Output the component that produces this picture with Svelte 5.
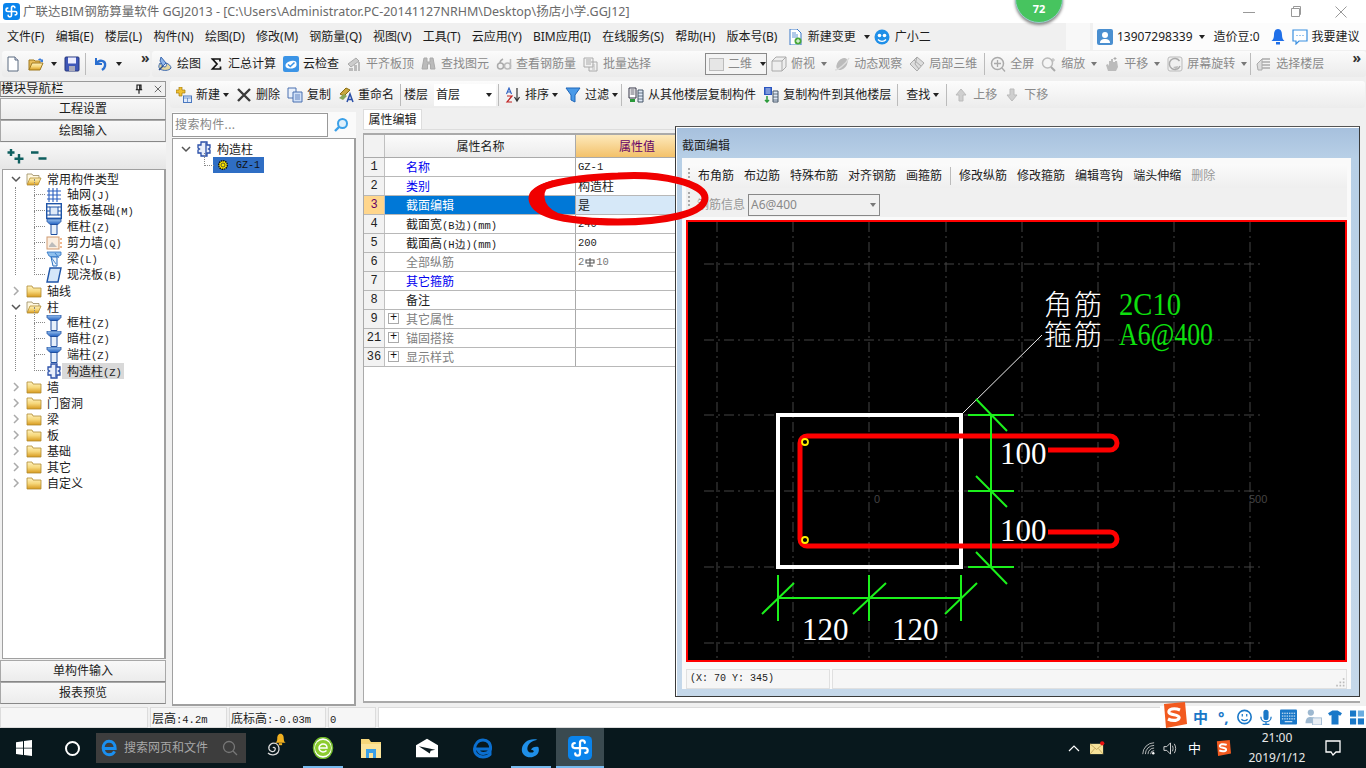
<script>
  const menu = ['文件(F)','编辑(E)','楼层(L)','构件(N)','绘图(D)','修改(M)','钢筋量(Q)','视图(V)','工具(T)','云应用(Y)','BIM应用(I)','在线服务(S)','帮助(H)','版本号(B)'];
  const tb1 = [
    {i:'paint',t:'绘图'},{i:'sigma',t:'汇总计算'},{i:'cloud',t:'云检查'},
    {i:'align',t:'平齐板顶',g:1},{i:'binoc',t:'查找图元',g:1},{i:'sixd',t:'查看钢筋量',g:1},{i:'batch',t:'批量选择',g:1}
  ];
  const tb1b = [
    {i:'cube',t:'俯视',g:1,c:1},{i:'orbit',t:'动态观察',g:1},{i:'local',t:'局部三维',g:1},{s:1},
    {i:'zoomf',t:'全屏',g:1},{i:'zoom',t:'缩放',g:1,c:1},{i:'pan',t:'平移',g:1,c:1},{i:'rot',t:'屏幕旋转',g:1,c:1},{s:1},{i:'floor',t:'选择楼层',g:1}
  ];
  const kinds = [
    {i:'grid',t:'轴网',m:'(J)'},{i:'raft',t:'筏板基础',m:'(M)'},{i:'col',t:'框柱',m:'(Z)'},
    {i:'wall',t:'剪力墙',m:'(Q)'},{i:'beam',t:'梁',m:'(L)'},{i:'slab',t:'现浇板',m:'(B)'}
  ];
  const cols = [
    {i:'col',t:'框柱',m:'(Z)'},{i:'col',t:'暗柱',m:'(Z)'},{i:'col',t:'端柱',m:'(Z)'},{i:'puzzle',t:'构造柱',m:'(Z)',on:1}
  ];
  const folders = ['墙','门窗洞','梁','板','基础','其它','自定义'];
  const props = [
    {n:'1',t:'名称',v:'GZ-1',c:'blue'},{n:'2',t:'类别',v:'构造柱',c:'blue'},{n:'3',t:'截面编辑',v:'是',sel:1},
    {n:'4',t:'截面宽',m:'(B边)(mm)',v:'240'},{n:'5',t:'截面高',m:'(H边)(mm)',v:'200'},
    {n:'6',t:'全部纵筋',c:'gray',rebar:1},{n:'7',t:'其它箍筋',c:'blue'},{n:'8',t:'备注'},
    {n:'9',t:'其它属性',c:'gray',plus:1},{n:'21',t:'锚固搭接',c:'gray',plus:1},{n:'36',t:'显示样式',c:'gray',plus:1}
  ];
  const dlgTools = ['布角筋','布边筋','特殊布筋','对齐钢筋','画箍筋','|','修改纵筋','修改箍筋','编辑弯钩','端头伸缩'];
  const vx = [718,794,870,947,1023,1099,1175,1251];
  const hy = [264,340,415,491,567,643];
</script>

{#snippet ic(n, c = 'i')}<svg class={c}><use href={'#' + n} /></svg>{/snippet}

<svg class="defs" aria-hidden="true">
  <defs>
    <linearGradient id="gold" x1="0" y1="0" x2="0" y2="1"><stop offset="0" stop-color="#fff3c0"/><stop offset=".5" stop-color="#f6d77a"/><stop offset="1" stop-color="#d89a1e"/></linearGradient>
    <linearGradient id="bl" x1="0" y1="0" x2="0" y2="1"><stop offset="0" stop-color="#9cc4f0"/><stop offset="1" stop-color="#1f5fc0"/></linearGradient>
    <symbol id="logo" viewBox="0 0 16 16"><rect width="16" height="16" rx="3" fill="#0a84ec"/><path d="M8 8V4.500a1.600 1.600 0 0 1 3.200 0M8 8h3.500a1.600 1.600 0 0 1 0 3.200M8 8v3.500a1.600 1.600 0 0 1-3.200 0M8 8H4.500a1.600 1.600 0 0 1 0-3.200" stroke="#fff" stroke-width="1.500" stroke-linecap="round" fill="none"/></symbol>
    <symbol id="new" viewBox="0 0 16 16"><path d="M3 1h7l3 3v11H3z" fill="#fff" stroke="#5a6a80"/><path d="M10 1v3h3" fill="#dde" stroke="#5a6a80"/></symbol>
    <symbol id="open" viewBox="0 0 16 16"><path d="M1 14V4h5l1 1h5v2" fill="#e9bd5a" stroke="#a07a20"/><path d="M1 14l3-7h11l-3 7z" fill="url(#gold)" stroke="#a07a20"/><path d="M10 4c1-2 3-2 4 0l1-1v3h-3l1-1c-1-1-2-1-3-1z" fill="#3b7bd8"/></symbol>
    <symbol id="save" viewBox="0 0 16 16"><rect x="1" y="1" width="14" height="14" rx="1" fill="#3f57b8" stroke="#27367a"/><rect x="4" y="1.500" width="8" height="6" fill="#eef"/><rect x="5" y="10" width="6" height="5" fill="#aab"/></symbol>
    <symbol id="undo" viewBox="0 0 16 16"><path d="M3 2v6h6" fill="none" stroke="#2a6fd0" stroke-width="2"/><path d="M3 8c3-5 10-4 9 2-.3 2-1.500 3-3 4" fill="none" stroke="#2a6fd0" stroke-width="2.400"/></symbol>
    <symbol id="paint" viewBox="0 0 16 16"><path d="M4 1l5 6-3 3-3-5z" fill="#8fb6e8" stroke="#3a68b0"/><path d="M9 7c3 1 5 3 5 5-2 3-8 3-11 1-2-2-1-4 0-6 1 2 3 4 5 4 1 0 2-2 1-4z" fill="#e6d9a0" stroke="#3a68b0"/><path d="M6 10l-4 4" stroke="#2a4f90" stroke-width="1.500"/></symbol>
    <symbol id="sigma" viewBox="0 0 16 16"><path d="M3.500 3h8.500v2.500M12 3H4.500L9 8l-4.500 5H12.500v-2.500" fill="none" stroke="#111" stroke-width="1.700"/></symbol>
    <symbol id="cloud" viewBox="0 0 16 16"><rect width="16" height="16" rx="2" fill="#3b94e6"/><path d="M2.500 9.500C2.500 7.500 5 5.500 8 5c3-1 6 0 5.500 3 .5 3-2.500 4.500-5.500 4.500S2.500 12 2.500 9.500z" fill="#fff"/><path d="M5 8.500l2.300 2L11.500 6.500" fill="none" stroke="#3b94e6" stroke-width="1.600"/></symbol>
    <symbol id="align" viewBox="0 0 16 16"><path d="M2 8l8-6 3 3-8 6z" fill="#ccc" stroke="#aaa"/><path d="M3 12h4v3H3zM8 9h3v6H8zM12 6h2v9h-2z" fill="#bbb"/></symbol>
    <symbol id="binoc" viewBox="0 0 16 16"><path d="M3 2h3v4h3V2h3l2 11H9.500V8h-3v5H1z" fill="#bbb" stroke="#aaa"/></symbol>
    <symbol id="sixd" viewBox="0 0 16 16"><circle cx="4.500" cy="10" r="3" fill="none" stroke="#aaa" stroke-width="1.500"/><path d="M4 7c0-2 1-3 3-4" fill="none" stroke="#aaa" stroke-width="1.500"/><circle cx="11.500" cy="10" r="3" fill="none" stroke="#bbb" stroke-width="1.500"/><path d="M14.500 3v10" stroke="#bbb" stroke-width="1.500"/></symbol>
    <symbol id="batch" viewBox="0 0 16 16"><path d="M1 2h9v9H1z" fill="#f2f2f2" stroke="#aaa"/><path d="M3 4h5M3 6h5M3 8h5M8 6h6v9H6v-4" fill="none" stroke="#aaa"/><path d="M9 9h3M9 11h3M9 13h3" stroke="#bbb"/></symbol>
    <symbol id="cube" viewBox="0 0 16 16"><path d="M1 5l4-4h10v10l-4 4H1z" fill="#eee" stroke="#aaa"/><path d="M1 5h10v10M11 5l4-4" fill="none" stroke="#aaa"/></symbol>
    <symbol id="orbit" viewBox="0 0 16 16"><ellipse cx="8" cy="8" rx="4.500" ry="7" transform="rotate(40 8 8)" fill="#bbb"/><path d="M1 14C4 14 12 8 15 2" fill="none" stroke="#ddd" stroke-width="1.500"/></symbol>
    <symbol id="local" viewBox="0 0 16 16"><path d="M8 1l7 6-7 8-7-7z" fill="#ddd" stroke="#aaa"/><path d="M5 4l7 6M8 1l-2 7 4 5" fill="none" stroke="#aaa"/></symbol>
    <symbol id="zoomf" viewBox="0 0 16 16"><circle cx="7.500" cy="7.500" r="6" fill="#f2f2f2" stroke="#aaa" stroke-width="1.500"/><path d="M7.500 4v7M4 7.500h7M12 12l3 3.500" stroke="#aaa" stroke-width="1.300" fill="none"/></symbol>
    <symbol id="zoom" viewBox="0 0 16 16"><circle cx="6.500" cy="7" r="5" fill="#f5f5f5" stroke="#bbb" stroke-width="1.500"/><path d="M10 11l4 4" stroke="#aaa" stroke-width="2"/><path d="M12 2v4M10 4h4" stroke="#bbb"/></symbol>
    <symbol id="pan" viewBox="0 0 16 16"><path d="M4 15l-2-6 2-1 1 2V5h2V3h2v3h2V5h2l1 6-2 4z" fill="#bbb"/><path d="M11 1v3M9.500 2.500h3" stroke="#aaa"/></symbol>
    <symbol id="rot" viewBox="0 0 16 16"><rect x="1" y="1" width="14" height="14" rx="2" fill="#f0f0f0" stroke="#bbb"/><path d="M12.500 5A5.500 5.500 0 1 0 13 10" fill="none" stroke="#aaa" stroke-width="1.500"/><path d="M6 11l5-1-1 4" fill="#bbb"/></symbol>
    <symbol id="floor" viewBox="0 0 16 16"><path d="M6 3h8M3 6h11M3 9h11M3 12h11" stroke="#aaa" stroke-width="1.300"/><path d="M1 8l5-5v11H2z" fill="#ddd" stroke="#aaa"/></symbol>
    <symbol id="add" viewBox="0 0 16 16"><path d="M3 0h3v3h3v3H6v3H3V6H0V3h3z" fill="#f0c030" stroke="#a07a10" stroke-width=".7"/><rect x="7.500" y="9" width="8" height="6.500" fill="#dfeafa" stroke="#4a78c0"/><path d="M7.500 11h8M11.500 11v4.500" stroke="#4a78c0" stroke-width=".7"/></symbol>
    <symbol id="del" viewBox="0 0 16 16"><path d="M2 2l12 12M14 2L2 14" stroke="#3a3a3a" stroke-width="2.400"/></symbol>
    <symbol id="copy" viewBox="0 0 16 16"><path d="M1 1h8v10H1z" fill="#eaf1fb" stroke="#4a70b0"/><path d="M6 5h9v10H6z" fill="#cfe0f8" stroke="#4a70b0"/><path d="M8 8h5M8 10h5M8 12h5" stroke="#4a70b0" stroke-width=".8"/></symbol>
    <symbol id="ren" viewBox="0 0 16 16"><path d="M2 7l6-6 4 2-6 6z" fill="#c9a840" stroke="#8a6d10"/><path d="M1 11l5-4 3 2-4 4z" fill="#88a85a"/><path d="M9 15l3-8 3 8M10.500 12.500h3" fill="none" stroke="#2a4fa8" stroke-width="1.500"/></symbol>
    <symbol id="sort" viewBox="0 0 16 16"><path d="M12 1v12M9.500 10l2.500 4 2.500-4" fill="none" stroke="#333" stroke-width="1.200"/><path d="M1.500 7l2.500-6 2.500 6M2.500 5h3" fill="none" stroke="#2a5fc0" stroke-width="1.100"/><path d="M2 9h5l-5 6h5" fill="none" stroke="#c02020" stroke-width="1.200"/></symbol>
    <symbol id="funnel" viewBox="0 0 16 16"><path d="M1 1h14L10 8v7l-4-2V8z" fill="#4a9ae8" stroke="#1f66b8"/></symbol>
    <symbol id="cpfrom" viewBox="0 0 16 16"><path d="M1 1h7v10H1z" fill="#fff" stroke="#334"/><path d="M2.500 3h4M2.500 5h4M2.500 7h4" stroke="#334" stroke-width=".8"/><path d="M10 3h5v12h-5z" fill="#dfe8f5" stroke="#456"/><path d="M10 6h5M10 9h5M10 12h5" stroke="#456" stroke-width=".8"/><rect x="2" y="12" width="5" height="3" fill="#2a9a3a"/></symbol>
    <symbol id="cpto" viewBox="0 0 16 16"><path d="M1 0h8v8H1z" fill="#2a55c0"/><path d="M2.500 2h5M2.500 4h5M2.500 6h5" stroke="#fff" stroke-width=".8"/><path d="M10 4h5v11h-5z" fill="#dfe8f5" stroke="#456"/><path d="M10 7h5M10 10h5M10 13h5" stroke="#456" stroke-width=".8"/><path d="M4 9v6M2 13l2 2 2-2" fill="none" stroke="#2a9a3a" stroke-width="1.500"/></symbol>
    <symbol id="up" viewBox="0 0 16 16"><path d="M8 2l5 6h-3v6H6V8H3z" fill="#cfcfcf" stroke="#bbb"/></symbol>
    <symbol id="down" viewBox="0 0 16 16"><path d="M8 14l5-6h-3V2H6v6H3z" fill="#cfcfcf" stroke="#bbb"/></symbol>
    <symbol id="docg" viewBox="0 0 16 16"><path d="M3 0h7l4 4v12H3z" fill="#fff" stroke="#3a78c8"/><path d="M5 4h4M5 6h6M5 8h6" stroke="#3a78c8" stroke-width=".8"/><circle cx="11" cy="12" r="3.500" fill="#4aa83a"/><path d="M11 10v4M9 12h4" stroke="#fff"/></symbol>
    <symbol id="guang" viewBox="0 0 16 16"><circle cx="8" cy="8" r="7.500" fill="#1f8fe8"/><circle cx="5.500" cy="6.500" r="1.800" fill="#fff"/><circle cx="10.500" cy="6.500" r="1.800" fill="#fff"/><path d="M4 10.500c2 2.500 6 2.500 8 0" fill="none" stroke="#fff" stroke-width="1.300"/></symbol>
    <symbol id="user" viewBox="0 0 16 16"><rect width="16" height="16" rx="2" fill="#4a8fd0"/><circle cx="8" cy="6" r="3" fill="#fff"/><path d="M3 14c0-3 2-4 5-4s5 1 5 4z" fill="#fff"/></symbol>
    <symbol id="bell" viewBox="0 0 16 16"><path d="M8 0c3 0 4 3 4 6 0 3 1 5 2.500 6h-13C3 11 4 9 4 6c0-3 1-6 4-6z" fill="#1f6fe8"/><rect x="6" y="13" width="4" height="2.500" fill="#1f6fe8"/></symbol>
    <symbol id="chat" viewBox="0 0 16 16"><path d="M1 1h14v11H7l-3 3v-3H1z" fill="#fff" stroke="#3a8fe0" stroke-width="1.200"/><path d="M4.500 6.500h1M7.500 6.500h1M10.500 6.500h1" stroke="#3a8fe0"/></symbol>
    <symbol id="plusplus" viewBox="0 0 17 15"><path d="M4 0v7M.5 3.500h7M12 5v9.500M7.500 9.800h9" stroke="#0f5f5f" stroke-width="2.400"/></symbol>
    <symbol id="minusminus" viewBox="0 0 17 15"><path d="M1 3.500h7.500M8.500 9.500h8" stroke="#0f5f5f" stroke-width="2.400"/></symbol>
    <symbol id="pinp" viewBox="0 0 10 12"><path d="M2.500 1h5v6h-5zM1 7h8M5 7v5" fill="none" stroke="#111" stroke-width="1.400"/><path d="M6 1v6" stroke="#111" stroke-width="1.600"/></symbol>
    <symbol id="closex" viewBox="0 0 10 10"><path d="M1 1l8 8M9 1l-8 8" stroke="#333" stroke-width=".9"/></symbol>
    <symbol id="fold" viewBox="0 0 16 16"><path d="M1 3h5l1 2h8v9H1z" fill="url(#gold)" stroke="#b08a30" stroke-width=".8"/></symbol>
    <symbol id="foldo" viewBox="0 0 16 16"><path d="M1 13V3h5l1 1.500h6V7" fill="#fff8e0" stroke="#9a8a60" stroke-width=".8"/><path d="M1 14l3-7h11l-3 7z" fill="url(#gold)" stroke="#b08a30" stroke-width=".8"/></symbol>
    <symbol id="chd" viewBox="0 0 10 10"><path d="M1 3l4 4 4-4" fill="none" stroke="#555" stroke-width="1.500"/></symbol>
    <symbol id="chr" viewBox="0 0 10 10"><path d="M3 1l4 4-4 4" fill="none" stroke="#aaa" stroke-width="1.500"/></symbol>
    <symbol id="grid" viewBox="0 0 16 16"><path d="M3 1v14M7 1v14M11 1v14M1 4h14M1 8h14M1 12h14" stroke="#2a5fc0" stroke-width="1.100"/></symbol>
    <symbol id="raft" viewBox="0 0 16 16"><rect x=".7" y=".7" width="14.600" height="14.600" fill="#fff" stroke="#1f55a8" stroke-width="1.400"/><rect x="4" y="4" width="8" height="8" fill="#dfeaf8" stroke="#1f55a8"/><path d="M1 4h3M12 4h3M1 8h3M12 8h3M1 12h3M12 12h3" stroke="#1f55a8"/></symbol>
    <symbol id="col" viewBox="0 0 16 16"><path d="M1 0h14v2.500l-3 3H4l-3-3z" fill="url(#bl)" stroke="#1f4fa0" stroke-width=".8"/><path d="M5 5.500h6V15.500H5z" fill="#e6effa" stroke="#1f4fa0"/></symbol>
    <symbol id="wall" viewBox="0 0 16 16"><rect x="1" y="2" width="12" height="12" fill="#fbeee0" stroke="#d09a70"/><path d="M3 11l3-4 2 2 3 3H3z" fill="#bbb"/><path d="M14 4h2M14 8h2M14 12h2" stroke="#e07020"/></symbol>
    <symbol id="beam" viewBox="0 0 16 16"><path d="M1 1h14v3l-4 2H6L3 5z" fill="#8fc0ee" stroke="#2a6fc0" stroke-width=".8"/><path d="M5 6h6v9H7z" fill="#eaf3fc" stroke="#2a6fc0"/><path d="M5 6l5 7M9 2l4 5" stroke="#2a6fc0" stroke-width=".8"/></symbol>
    <symbol id="slab" viewBox="0 0 16 16"><path d="M4 1h11l-3 14H1z" fill="#d5e6f8" stroke="#1f55a8" stroke-width="1.400"/></symbol>
    <symbol id="puzzle" viewBox="0 0 16 16"><path d="M5 1h6v3h3v3l-1.500 1L14 9v3h-3v3H5v-3H2V9l1.500-1L2 7V4h3z" fill="#e8eefa" stroke="#2a4fa8" stroke-width="1.300"/><path d="M10 2v12" stroke="#2a4fa8" stroke-width="1.300"/></symbol>
    <symbol id="gear" viewBox="0 0 12 12"><circle cx="6" cy="6" r="4.300" fill="#ffe800" stroke="#111" stroke-width="1.400" stroke-dasharray="1.500 .7"/><circle cx="6" cy="6" r="2" fill="#ffe800" stroke="#333" stroke-width=".8"/></symbol>
    <symbol id="search" viewBox="0 0 16 16"><circle cx="9.500" cy="6.500" r="4.500" fill="#dff0fc" stroke="#3aa0e8" stroke-width="2"/><path d="M6 10l-4 4" stroke="#3aa0e8" stroke-width="2.400"/></symbol>
    <symbol id="rebar" viewBox="0 0 10 10"><path d="M1 3h8v3H1zM5 1v8M2 9h6" fill="none" stroke="#555" stroke-width="1.100"/></symbol>
    <symbol id="win" viewBox="0 0 16 16"><path d="M0 2.300l7-1v6.400H0zM8 1.100L16 0v7.700H8zM0 8.500h7v6.400l-7-1zM8 8.500h8V16l-8-1.100z" fill="#fff"/></symbol>
    <symbol id="ie" viewBox="0 0 16 16"><path d="M3 8.500h10.500C13.500 4 11 2 8 2 5 2 2.800 4.500 2.800 8c0 3.500 2.200 6 5.200 6 2.200 0 4-1 5-3" fill="none" stroke="#1a8ff0" stroke-width="2.600"/></symbol>
    <symbol id="spiral" viewBox="0 0 16 16"><path d="M8 8c1-1.500 3 0 2 2-1 2.500-5 2-6-1-1-4 3-7 7-5.500 3 1.500 4 6 2 9-2 2.500-7 3.500-10 .5" fill="none" stroke="#ddd" stroke-width="1.300"/></symbol>
    <symbol id="bellg" viewBox="0 0 16 16"><path d="M8 1c3 0 4 3 4 6s1 4 2.500 5h-13C3 11 4 10 4 7s1-6 4-6z" fill="#f0b020"/><rect x="6" y="12.500" width="4" height="2.500" fill="#f0b020"/></symbol>
    <symbol id="e360" viewBox="0 0 22 22"><ellipse cx="11" cy="11" rx="9.500" ry="10.500" fill="#fff" stroke="#70b828" stroke-width="1.500"/><circle cx="11" cy="11" r="8" fill="#8ccc30"/><path d="M7 11h8c0-3-2-4-4-4s-4 2-4 4 2 4 4 4c1.500 0 2.500-.5 3.500-1.500" fill="none" stroke="#fff" stroke-width="1.500"/></symbol>
    <symbol id="explorer" viewBox="0 0 22 22"><path d="M1 2h8l2 3h10v16H1z" fill="#f6d77a"/><path d="M1 7h20v14H1z" fill="#fbe49a"/><rect x="6" y="12" width="10" height="9" fill="#3aa0e8"/><rect x="9" y="16" width="4" height="5" fill="#fbe49a"/></symbol>
    <symbol id="mail" viewBox="0 0 24 20"><path d="M0 7L12 0l12 7v13H0z" fill="#fff"/><path d="M3 8l18 4-5 1-1 3z" fill="#0a1a1f"/></symbol>
    <symbol id="edge" viewBox="0 0 22 22"><path d="M2.500 12h16C19 6 15.500 3 11 3 6 3 3 7 2.500 12c0 5 4 8 8.500 8 3 0 5.500-1 7-2.500v-3.500c-2 1.500-4 2.500-6.500 2.500-3 0-5-1.500-5.500-4.500" fill="none" stroke="#0b6fd0" stroke-width="3"/></symbol>
    <symbol id="gtask" viewBox="0 0 24 24"><path d="M19 3C10 1 3 6 2 13c-.5 6 5 10 11 9 6-1 9-6 7-11-3-1-7 0-8 3 2 0 3 1 3 2-2 2-7 1-7-3 0-6 6-9 11-10z" fill="#1f8fe8"/></symbol>
    <symbol id="sogou" viewBox="0 0 26 26"><path d="M3 2l21-2 2 22-21 4z" fill="#f25a1f"/><path d="M19 8C13 5.500 7 7 8 10.500c1 3 10 1.500 10 5 .5 3-6 4-11 1.500" fill="none" stroke="#fff" stroke-width="3.200"/></symbol>
    <symbol id="wifi" viewBox="0 0 16 16"><path d="M2 15A13 13 0 0 1 15 2M5 15A10 10 0 0 1 15 5M8 15a7 7 0 0 1 7-7M11 15a4 4 0 0 1 4-4" fill="none" stroke="#ccc"/><circle cx="14" cy="14" r="1.400" fill="#fff"/></symbol>
    <symbol id="spk" viewBox="0 0 16 16"><path d="M1 6h3l4-4v12l-4-4H1z" fill="none" stroke="#ddd"/><path d="M10 5c1 2 1 4 0 6M12 3c2 3 2 7 0 10" fill="none" stroke="#ccc"/></symbol>
    <symbol id="mailt" viewBox="0 0 16 16"><rect y="3" width="14" height="11" fill="#f6e29a"/><path d="M0 3l7 6 7-6M0 14l5-6M14 14L9 8" fill="none" stroke="#b89a50" stroke-width=".8"/><circle cx="13" cy="2.500" r="2.300" fill="#e81010"/></symbol>
    <symbol id="notif" viewBox="0 0 16 16"><path d="M1 1h14v11h-4l-3 3-2-3H1z" fill="none" stroke="#fff" stroke-width="1.300"/></symbol>
    <symbol id="smile" viewBox="0 0 18 18"><circle cx="9" cy="9" r="7.500" fill="#fff" stroke="#1a78c8" stroke-width="1.800"/><path d="M6.500 5.500v3M11.500 5.500v3M5.500 11.500c2 2 5 2 7 0" fill="none" stroke="#1a78c8" stroke-width="1.400"/></symbol>
    <symbol id="mic" viewBox="0 0 14 18"><rect x="4" y="0" width="6" height="12" rx="3" fill="#1a78c8"/><path d="M1 8c0 8 12 8 12 0M7 14v3M3 17h8" fill="none" stroke="#1a78c8" stroke-width="1.500"/></symbol>
    <symbol id="kbd" viewBox="0 0 18 16"><rect width="18" height="16" rx="1" fill="#1a78c8"/><path d="M2 4h14M2 7h14M2 10h14" stroke="#fff" stroke-dasharray="1.500 1"/><path d="M5 13h8" stroke="#fff"/></symbol>
    <symbol id="person" viewBox="0 0 18 18"><circle cx="6" cy="4" r="3.500" fill="#9db8d0"/><path d="M0 16c0-6 3-7 6-7s4 1 5 2v5z" fill="#9db8d0"/><rect x="8" y="10" width="10" height="8" fill="#e8eef4" stroke="#9db8d0"/></symbol>
    <symbol id="shirt" viewBox="0 0 16 16"><path d="M5 0h6l5 3-2 3-2-1v11H4V5L2 6 0 3z" fill="#1a78c8"/></symbol>
    <symbol id="tiles" viewBox="0 0 16 16"><rect width="7" height="7" fill="#1a78c8"/><rect x="9" width="7" height="7" fill="#6aace0"/><rect y="9" width="7" height="7" fill="#1a78c8"/><rect x="9" y="9" width="7" height="7" fill="#1a78c8"/></symbol>
  </defs>
</svg>

<div class="app">
  <header class="title">
    {@render ic('logo', 'logo')}
    <span class="ttext">广联达BIM钢筋算量软件 GGJ2013 - [C:\Users\Administrator.PC-20141127NRHM\Desktop\扬店小学.GGJ12]</span>
    <div class="winbtns">
      <svg class="wb" viewBox="0 0 14 14"><path d="M1 7.500h12" stroke="#999" /></svg>
      <svg class="wb" viewBox="0 0 14 14"><path d="M3.500 3.500h8v8h-8zM5.500 3.500v-2h7v8h-1" fill="none" stroke="#999" /></svg>
      <svg class="wb" viewBox="0 0 14 14"><path d="M1.500 1.500l11 11M12.500 1.500l-11 11" stroke="#999" /></svg>
    </div>
  </header>

  <nav class="menu">
    {#each menu as m}<span>{m}</span>{/each}
    <span class="mitem first">{@render ic('docg')}新建变更<i class="caret"></i></span>
    <span class="mitem second">{@render ic('guang')}广小二</span>
    <div class="menu-right">
      <b class="lite"></b>
      <div class="acct">
        {@render ic('user')}<span>13907298339</span><i class="caret"></i><span class="bean">造价豆:0</span>
        {@render ic('bell')}{@render ic('chat')}<span class="sug">我要建议</span>
      </div>
    </div>
  </nav>

  <div class="tb1">
    <div class="seg left">
      {@render ic('new')}{@render ic('open')}<i class="caret"></i>{@render ic('save')}<u class="sep"></u>{@render ic('undo')}<i class="caret"></i>
      <span class="more">»</span>
    </div>
    <div class="seg right">
      {#each tb1 as it}<span class="ti" class:g={it.g}>{@render ic(it.i)}{it.t}</span>{/each}
      <span class="box2d"><b></b>二维<i class="caret"></i></span>
      {#each tb1b as it}
        {#if it.s}<u class="sep"></u>{:else}<span class="ti" class:g={it.g}>{@render ic(it.i)}{it.t}{#if it.c}<i class="caret gc"></i>{/if}</span>{/if}
      {/each}
      <span class="more end">»</span>
    </div>
  </div>

  <main class="main">
    <aside class="nav">
      <div class="navhead"><span>模块导航栏</span>{@render ic('pinp', 'pin')}{@render ic('closex', 'x')}</div>
      <button class="bt">工程设置</button>
      <button class="bt">绘图输入</button>
      <div class="treetool">{@render ic('plusplus', 'pp')}{@render ic('minusminus', 'pp')}</div>
      <div class="tree">
        <div class="r top">{@render ic('chd', 'ch')}{@render ic('foldo')}<span class="rt">常用构件类型</span></div>
        <div class="kids">
          {#each kinds as k}<div class="r kid">{@render ic(k.i)}<span class="rt">{k.t}<span class="m">{k.m}</span></span></div>{/each}
        </div>
        <div class="r top">{@render ic('chr', 'ch')}{@render ic('fold')}<span class="rt">轴线</span></div>
        <div class="r top">{@render ic('chd', 'ch')}{@render ic('foldo')}<span class="rt">柱</span></div>
        <div class="kids">
          {#each cols as k}<div class="r kid">{@render ic(k.i)}<span class="rt" class:on={k.on}>{k.t}<span class="m">{k.m}</span></span></div>{/each}
        </div>
        {#each folders as f}<div class="r top">{@render ic('chr', 'ch')}{@render ic('fold')}<span class="rt">{f}</span></div>{/each}
      </div>
      <button class="bt">单构件输入</button>
      <button class="bt">报表预览</button>
    </aside>

    <section class="work">
      <div class="tb2">
        <span class="ti">{@render ic('add')}新建<i class="caret"></i></span>
        <span class="ti">{@render ic('del')}删除</span>
        <span class="ti">{@render ic('copy')}复制</span>
        <span class="ti">{@render ic('ren')}重命名</span>
        <u class="sep"></u>
        <span class="fl">楼层</span>
        <span class="combo">首层<i class="caret"></i></span>
        <u class="sep"></u>
        <span class="ti">{@render ic('sort')}排序<i class="caret"></i></span>
        <span class="ti">{@render ic('funnel')}过滤<i class="caret"></i></span>
        <u class="sep"></u>
        <span class="ti">{@render ic('cpfrom')}从其他楼层复制构件</span>
        <span class="ti">{@render ic('cpto')}复制构件到其他楼层</span>
        <u class="sep"></u>
        <span class="ti find">查找<i class="caret"></i></span>
        <u class="sep"></u>
        <span class="ti g">{@render ic('up')}上移</span>
        <span class="ti g">{@render ic('down')}下移</span>
      </div>
      <div class="panes">
        <div class="comp">
          <div class="searchrow"><span class="sinput">搜索构件...</span>{@render ic('search', 'sic')}</div>
          <div class="ctree">
            <div class="r rootr">{@render ic('chd', 'ch')}{@render ic('puzzle')}<span class="rt">构造柱</span></div>
            <div class="r gz"><span class="gzb">{@render ic('gear', 'gear')}GZ-1</span></div>
          </div>
        </div>
        <div class="prop">
          <div class="tabs"><span class="tab">属性编辑</span></div>
          <div class="tbl">
            <div class="tr head"><span class="num"></span><span class="nm">属性名称</span><span class="val hv"><span>属性值</span></span></div>
            {#each props as p}
              <div class="tr" class:sel={p.sel}>
                <span class="num">{p.n}</span>
                <span class="nm {p.c ?? ''}">
                  {#if p.plus}<b class="plus">+</b>{/if}{p.t}{#if p.m}<span class="m">{p.m}</span>{/if}
                </span>
                <span class="val" class:sm={p.v && !p.sel && p.v !== '构造柱'}>
                  {#if p.rebar}<span class="rb">2{@render ic('rebar', 'rbi')}10</span>{:else}{p.v ?? ''}{/if}
                </span>
              </div>
            {/each}
          </div>
        </div>
      </div>
    </section>
  </main>

  <footer class="status">
    <span class="sc c0"></span><span class="sc c1">层高<span class="m">:4.2m</span></span><span class="sc c2">底标高<span class="m">:-0.03m</span></span><span class="sc c3"><span class="m">0</span></span><span class="sc c4"></span>
  </footer>

  <div class="taskbar">
    <span class="tslot s-win">{@render ic('win')}</span>
    <span class="tslot s-ring"><b class="ring"></b></span>
    <div class="tsearch">{@render ic('ie', 'ie')}<span>搜索网页和文件</span>
      <svg class="mag" viewBox="0 0 16 16"><circle cx="7" cy="7" r="5.500" fill="none" stroke="#777" stroke-width="1.300"/><path d="M11 11l4 4" stroke="#777" stroke-width="1.300"/></svg>
    </div>
    <span class="tslot s-sp">{@render ic('spiral', 'sp')}{@render ic('bellg', 'bg')}</span>
    <span class="tslot w40 ul">{@render ic('e360', 'big')}</span>
    <span class="tslot w50">{@render ic('explorer', 'big')}</span>
    <span class="tslot w50">{@render ic('mail', 'big')}</span>
    <span class="tslot w50">{@render ic('edge', 'big')}</span>
    <span class="tslot w40 ul">{@render ic('gtask', 'big')}</span>
    <span class="tslot active ul">{@render ic('logo', 'big2')}</span>
    <div class="tray">
      <svg class="chev" viewBox="0 0 12 8"><path d="M1 7l5-5 5 5" fill="none" stroke="#fff" stroke-width="1.200"/></svg>
      {@render ic('mailt', 'mt')}
      {@render ic('wifi', 'wi')}
      {@render ic('spk', 'spk')}
      <span class="zh">中</span>
      {@render ic('sogou', 'sg')}
      <div class="clock"><span>21:00</span><span>2019/1/12</span></div>
      {@render ic('notif', 'nt')}
    </div>
  </div>

  <!-- floating things above the workspace -->
  <div class="bubble"><span>72</span></div>

  <div class="ime">
    {@render ic('sogou', 'imes')}
    <span class="imez">中</span><span class="imep">°,</span>
    {@render ic('smile', 'im1')}{@render ic('mic', 'im2')}{@render ic('kbd', 'im1')}{@render ic('person', 'im1')}{@render ic('shirt', 'im3')}{@render ic('tiles', 'im3')}
  </div>

  <div class="dialog">
    <div class="dtitle">截面编辑</div>
    <div class="dbody">
      <div class="dbar">
        <em class="grip"></em>
        {#each dlgTools as t}{#if t === '|'}<u class="sep"></u>{:else}<span>{t}</span>{/if}{/each}
        <span class="dis">删除</span>
      </div>
      <div class="dbar2">
        <em class="grip"></em>
        <span class="dis">钢筋信息</span>
        <span class="dcombo">A6@400<i class="caret gc"></i></span>
      </div>
      <div class="canvas">
        <svg class="draw" viewBox="689 222 656 438">
          {#each vx as x}<line x1={x} y1="222" x2={x} y2="660" class="gl" />{/each}
          {#each hy as y}<line x1="705" y1={y} x2="1264" y2={y} class="gl" />{/each}
          <text x="875" y="503" class="axis">0</text>
          <text x="1250" y="503" class="axis">500</text>

          <line x1="964" y1="413" x2="1043" y2="335" class="leader" />
          <rect x="779" y="415" width="183" height="152" class="outline" />

          <path d="M1049 450H1111a7 7 0 0 0 0-14H808a7 7 0 0 0-7 7V539a7 7 0 0 0 7 7H1111a7 7 0 0 0 0-14H1049" class="hoop" />
          <circle cx="806" cy="442" r="3" class="bar" />
          <circle cx="806" cy="540" r="3" class="bar" />

          <path d="M992 415V567M969 415H1015M969 491H1015M969 567H1015M977 399L1008 431M977 476L1008 507M977 552L1008 584M779 598H962M779 575V621M870 575V621M962 575V621M763 614L795 583M854 614L887 583M946 614L978 583" class="dim" />

          <text x="1045" y="315" class="cjk">角筋</text>
          <text x="1045" y="345" class="cjk">箍筋</text>
          <text x="1120" y="315" class="gtxt" textLength="62" lengthAdjust="spacingAndGlyphs">2C10</text>
          <text x="1120" y="345" class="gtxt" textLength="94" lengthAdjust="spacingAndGlyphs">A6@400</text>
          <text x="1001" y="464" class="num2">100</text>
          <text x="1001" y="541" class="num2">100</text>
          <text x="803" y="640" class="num2">120</text>
          <text x="893" y="640" class="num2">120</text>
        </svg>
      </div>
      <div class="dstatus"><span class="d1">(X: 70 Y: 345)</span><span class="d2"><svg class="rz" viewBox="0 0 10 10"><path d="M8 2h1.500v1.500H8zM5 5h1.500v1.500H5zM8 5h1.500v1.500H8zM2 8h1.500v1.500H2zM5 8h1.500v1.500H5zM8 8h1.500v1.500H8z" fill="#bbb"/></svg></span></div>
    </div>
  </div>

  <svg class="mark" viewBox="0 0 190 60">
    <path d="M95 6C140 3 182 14 182 28C182 44 140 52 95 52C50 52 9 46 9 28C9 14 50 8 95 6Z" fill="none" stroke="#f00000" stroke-width="7" />
    <path d="M9 28C9 20 18 15 30 12C16 18 16 36 34 44C18 42 7 37 9 28Z" fill="#f00000" stroke="#f00000" stroke-width="3" />
  </svg>
</div>

<style>
  :global(body) { margin: 0; background: #f0f0f0; }
  .defs { position: absolute; width: 0; height: 0; }
  .app { position: relative; width: 1366px; height: 768px; overflow: hidden; display: flex; flex-direction: column; background: #f0f0f0; color: #1c1c1c; font: 12px/16px "Noto Sans", "Noto Sans CJK SC", sans-serif; }
  .i { width: 16px; height: 16px; flex: none; display: block; }
  .caret { display: inline-block; width: 0; height: 0; border: 3px solid transparent; border-top: 4px solid #222; border-bottom: 0; flex: none; }
  .caret.gc { border-top-color: #777; }
  .sep { width: 1px; height: 22px; background: #bbb; flex: none; display: block; text-decoration: none; }
  .m { font-family: "Liberation Mono", monospace; font-size: 10.500px; }

  .title { height: 23px; background: #fff; display: flex; align-items: center; flex: none; }
  .logo { width: 17px; height: 17px; margin-left: 3px; }
  .ttext { margin-left: 3px; color: #6a6a6a; font-size: 12.500px; }
  .winbtns { margin-left: auto; display: flex; gap: 32px; margin-right: 18px; }
  .wb { width: 14px; height: 14px; display: block; }

  .menu { height: 27px; flex: none; display: flex; align-items: center; gap: 11.200px; padding-left: 7px; }
  .mitem { display: flex; align-items: center; gap: 5px; }
  .mitem.first { margin-left: -2px; }
  .mitem.second { margin-left: -7px; }
  .mitem .caret { margin-left: 3px; }
  .menu-right { margin-left: auto; display: flex; align-items: stretch; height: 27px; }
  .lite { width: 24px; background: #f8f8f8; margin-right: 3px; }
  .acct { width: 273px; box-sizing: border-box; background: #fcfcfc; display: flex; align-items: center; padding-left: 4px; }
  .acct .caret { margin: 0 9px 0 6px; }
  .acct span:first-of-type { margin-left: 4px; }
  .bean { margin-right: 10px; }
  .sug { margin-left: 4px; }
  .acct .i + .i { margin-left: 6px; }

  .tb1 { height: 26px; flex: none; margin-top: 1px; display: flex; gap: 2px; padding-left: 2px; }
  .seg { background: linear-gradient(#fbfbfb, #ebebeb); border-radius: 3px; display: flex; align-items: center; height: 100%; }
  .seg.left { width: 148px; box-sizing: border-box; padding-left: 3px; gap: 7px; position: relative; }
  .seg.left .sep { margin-left: -2px; }
  .more { font-size: 14px; line-height: 14px; font-weight: 700; color: #333; align-self: flex-start; }
  .seg.left .more { margin-left: 12px; }
  .seg.right { flex: 1; padding-left: 5px; gap: 7px; }
  .seg.right .sep { margin-right: -2px; }
  .more.end { margin-left: auto; margin-right: 5px; }
  .ti { display: flex; align-items: center; gap: 4px; white-space: nowrap; }
  .ti.g { color: #8a8a8a; }
  .ti .caret { margin-left: -1px; }
  .ti .gc { margin-left: 2px; }
  .ti:has(.caret) + .sep { margin-left: -4px; }
  .box2d { width: 62px; height: 22px; box-sizing: border-box; border: 1px solid #8a8a8a; display: flex; align-items: center; gap: 4px; padding-left: 3px; color: #8a8a8a; margin: 0 -3px 0 47px; background: #f4f4f4; }
  .box2d b { width: 13px; height: 11px; background: #e6e6e6; border: 1px solid #bbb; }
  .box2d .caret { margin-left: 4px; }

  .main { flex: 1; min-height: 0; display: flex; margin-top: 3px; }
  .nav { width: 166px; flex: none; display: flex; flex-direction: column; padding-bottom: 3px; box-sizing: border-box; }
  .navhead { height: 16px; margin: 1px 0 1px; width: 166px; box-sizing: border-box; border: 1px solid #999; border-bottom-color: #777; background: #f0f0f0; display: flex; align-items: center; line-height: 14px; font-size: 12.500px; white-space: nowrap; }
  .pin { width: 8px; height: 10px; margin-left: auto; }
  .x { width: 8px; height: 8px; margin: 0 3px 0 11px; }
  .bt { height: 22px; flex: none; margin: 0; padding: 0; border: 1px solid #a8a8a8; border-bottom-color: #888; background: linear-gradient(#f8f8f8, #ececec); font: inherit; color: #1c1c1c; }
  .treetool { height: 26px; flex: none; display: flex; align-items: center; gap: 6px; padding-left: 7px; margin-top: 1px; background: linear-gradient(#f8f8f8, #e6e6e6); }
  .pp { width: 17px; height: 15px; }
  .tree { flex: 1; min-height: 0; margin: 0 0 1px 2px; border: 1px solid #a0a0a0; border-width: 1px 2px 1px 1px; background: #fff; padding-top: 1px; font-family: "Noto Sans CJK SC", sans-serif; }
  .r { height: 16px; display: flex; align-items: center; position: relative; line-height: 16px; white-space: nowrap; }
  .ch { width: 10px; height: 10px; flex: none; }
  .top { padding-left: 8px; }
  .top .i { margin-left: 5px; }
  .rt { margin-left: 5px; padding: 0 2px 0 0; }
  .kids { position: relative; }
  .kids::before { content: ""; position: absolute; left: 12px; top: 0; bottom: 8px; border-left: 1px dotted #888; }
  .kid { padding-left: 43px; }
  .kid::before { content: ""; position: absolute; left: 31px; top: -8px; width: 10px; height: 15px; border-left: 1px dotted #888; border-bottom: 1px dotted #888; }
  .on { background: #d9d9d9; margin-left: 0; padding-left: 5px; align-self: stretch; margin-right: 0; }

  .work { flex: 1; min-width: 0; display: flex; flex-direction: column; margin-left: 4px; }
  .tb2 { height: 27px; flex: none; margin-top: 1px; display: flex; align-items: center; gap: 7px; padding-left: 6px; background: linear-gradient(#fcfcfc, #ececec); border-radius: 3px; margin-right: 1px; }
  .tb2 .sep { margin: 0 -1px; }
  .tb2 .ti:has(.caret) + .sep { margin-left: -4px; }
  .tb2 .ti.find { margin-left: 2px; }
  .tb2 .ti.find:has(.caret) + .sep { margin-left: 0; }
  .fl { margin: 0 -1px 0 -3px; }
  .combo { width: 62px; height: 22px; box-sizing: border-box; background: #fff; padding-left: 2px; display: flex; align-items: center; justify-content: space-between; padding-right: 4px; margin-right: -4px; }
  .panes { flex: 1; min-height: 0; display: flex; padding: 4px 6px 0 2px; gap: 7px; }
  .comp { width: 184px; flex: none; display: flex; flex-direction: column; }
  .searchrow { height: 26px; display: flex; align-items: center; background: #fafafa; flex: none; }
  .sinput { width: 156px; height: 24px; box-sizing: border-box; border: 1px solid #999; background: #fff; color: #888; padding-left: 2px; line-height: 22px; font-size: 12px; letter-spacing: .4px; }
  .sic { width: 16px; height: 16px; margin-left: 5px; }
  .ctree { flex: 1; border: 1px solid #a0a0a0; border-width: 1px 2px 2px 1px; background: #fff; padding-top: 2px; margin-bottom: 1px; font-family: "Noto Sans CJK SC", sans-serif; }
  .rootr { padding-left: 8px; margin-top: 0; }
  .rootr .i { margin-left: 5px; }
  .gz { padding-left: 40px; }
  .gz::before { content: ""; position: absolute; left: 31px; top: -4px; width: 9px; height: 12px; border-left: 1px dotted #888; border-bottom: 1px dotted #888; }
  .gzb { width: 51px; height: 16px; background: #2f6ec4; color: #111; display: flex; align-items: center; gap: 7px; padding-left: 4px; box-sizing: border-box; font: 10px "Liberation Mono", monospace; }
  .gear { width: 12px; height: 12px; }

  .prop { flex: 1; min-width: 0; display: flex; flex-direction: column; margin-top: -3px; }
  .tabs { height: 20px; border-bottom: 1px solid #ddd; flex: none; background: #f0f0f0; }
  .tab { display: block; width: 59px; height: 20px; box-sizing: border-box; background: #fff; border: 1px solid #ddd; border-bottom: 0; line-height: 19px; text-align: center; }
  .tbl { flex: 1; background: #fff; border: 1px solid #aaa; border-width: 2px 0 2px 1px; margin-top: 3px; margin-bottom: 4px; font-family: "Noto Sans CJK SC", sans-serif; }
  .tr { height: 19px; display: flex; box-sizing: border-box; border-bottom: 1px solid #b8b8b8; }
  .tr.head { height: 23px; border-bottom-color: #aaa; }
  .num { width: 21px; flex: none; background: #f2f2f2; border-right: 1px solid #c0c0c0; box-sizing: border-box; text-align: center; font: 12px/18px "Liberation Mono", monospace; color: #222; }
  .nm { width: 191px; flex: none; border-right: 1px solid #aaa; box-sizing: border-box; padding-left: 21px; line-height: 18px; white-space: nowrap; position: relative; }
  .head .nm { background: linear-gradient(#fbfbfb, #ececec); text-align: center; padding: 0 0 0 1px; line-height: 21px; }
  .head .num { background: #f2f2f2; }
  .nm.blue { color: #0000f0; }
  .nm.gray { color: #808080; }
  .val { flex: 1; padding-left: 2px; line-height: 18px; }
  .val.sm { font: 10.500px/18px "Liberation Mono", monospace; }
  .hv { padding: 0; background: linear-gradient(#fde9bb, #f3c16a); color: #660066; line-height: 21px; }
  .hv span { display: block; width: 122px; text-align: center; }
  .sel .num { background: #ffd68c; color: #660066; }
  .sel .nm { background: #0078d7; color: #fff; }
  .sel .val { background: #d6e8f8; }
  .plus { position: absolute; left: 3px; top: 3px; width: 11px; height: 11px; box-sizing: border-box; border: 1px solid #aaa; font: 400 12px/9px "Liberation Mono", monospace; color: #111; text-align: center; }
  .rb { display: flex; align-items: center; gap: 1px; color: #777; font: 10.500px/18px "Liberation Mono", monospace; height: 18px; }
  .rbi { width: 10px; height: 10px; }

  .status { height: 21px; flex: none; display: flex; gap: 2px; font-family: "Noto Sans CJK SC", sans-serif; }
  .sc { box-sizing: border-box; height: 21px; border: 1px solid #dcdcdc; background: #f6f6f6; line-height: 19px; padding-left: 1px; white-space: nowrap; }
  .c0 { width: 148px; }
  .c1 { width: 77px; }
  .c2 { width: 97px; }
  .c3 { width: 48px; }
  .c4 { flex: 1; background: #fff; }

  .taskbar { height: 40px; flex: none; background: #08181d; display: flex; align-items: stretch; color: #fff; position: relative; }
  .tslot { display: flex; align-items: center; justify-content: center; position: relative; flex: none; }
  .s-win { width: 48px; }
  .s-ring { width: 48px; }
  .ring { width: 11px; height: 11px; border: 2px solid #fff; border-radius: 50%; display: block; }
  .tsearch { width: 150px; height: 30px; align-self: center; background: #3d3d3d; display: flex; align-items: center; color: #a8a8a8; flex: none; }
  .ie { width: 18px; height: 18px; margin: 0 6px 0 4px; }
  .mag { width: 16px; height: 16px; margin-left: 14px; }
  .s-sp { width: 57px; }
  .sp { width: 16px; height: 16px; margin-left: -4px; }
  .bg { width: 13px; height: 13px; position: absolute; left: 28px; top: 5px; }
  .w40 { width: 40px; }
  .w50 { width: 50px; margin: 0 3px; }
  .big { width: 22px; height: 22px; }
  .big2 { width: 24px; height: 24px; }
  .ul::after { content: ""; position: absolute; left: 0; right: 0; bottom: 0; height: 2px; background: #76b9ed; }
  .active { width: 48px; background: #3a4a50; margin-left: 5px; }
  .tray { margin-left: auto; display: flex; align-items: center; }
  .chev { width: 12px; height: 8px; margin-right: 10px; }
  .mt { width: 15px; height: 15px; margin-right: 36px; }
  .wi { width: 14px; height: 14px; margin-right: 8px; }
  .spk { width: 15px; height: 15px; margin-right: 10px; }
  .zh { font-size: 13px; width: 14px; margin-right: 13px; }
  .sg { width: 16px; height: 16px; margin-right: 16px; }
  .clock { display: flex; flex-direction: column; align-items: center; width: 60px; line-height: 20px; color: #e8e8e8; font-size: 12px; margin-right: 18px; }
  .nt { width: 16px; height: 16px; margin-right: 25px; }

  .bubble { position: absolute; left: 1015px; top: -25px; width: 48px; height: 48px; border-radius: 50%; background: #47c45f; border: 1px solid #9cc; box-shadow: 0 2px 3px #888; box-sizing: border-box; color: #fff; text-align: center; font-weight: 700; font-size: 11px; }
  .bubble span { position: absolute; left: 0; right: 0; top: 26px; line-height: 14px; }

  .ime { position: absolute; left: 1160px; top: 706px; width: 206px; height: 22px; background: #fff; display: flex; align-items: center; color: #1a78c8; }
  .imes { width: 28px; height: 26px; margin-top: -4px; flex: none; }
  .imez { margin-left: 5px; font-size: 15px; font-weight: 700; width: 15px; }
  .imep { margin-left: 10px; font-size: 15px; font-weight: 700; width: 10px; }
  .im1 { width: 17px; height: 16px; margin-left: 8px; }
  .im2 { width: 12px; height: 17px; margin-left: 7px; }
  .im3 { width: 14px; height: 15px; margin-left: 6px; }
  .im3 + .im3 { margin-left: 8px; }

  .dialog { position: absolute; left: 675px; top: 126px; width: 685px; height: 571px; box-sizing: border-box; border: 1px solid #3a3a3a; border-top-color: #555; background: linear-gradient(#a6c0dd 0, #b7cfe6 30px, #c5d8ea 100%); box-shadow: 1px 1px 0 #fff inset; display: flex; flex-direction: column; padding: 0 8px 7px 6px; }
  .dtitle { height: 31px; flex: none; line-height: 37px; color: #222; }
  .dbody { flex: 1; min-height: 0; background: #fafafa; display: flex; flex-direction: column; padding: 3px 4px 0; }
  .dbar { height: 24px; flex: none; margin-top: 3px; display: flex; align-items: center; gap: 10px; background: linear-gradient(#fbfbfb, #efefef); padding-left: 12px; position: relative; font-size: 12px; }
  .dbar .sep { margin: 0 -2px; height: 18px; }
  .dis { color: #999; }
  .grip { position: absolute; left: 2px; top: 4px; width: 2px; height: 16px; background-image: linear-gradient(#aaa 50%, transparent 50%); background-size: 2px 4px; }
  .dbar2 { height: 29px; flex: none; box-sizing: border-box; display: flex; align-items: flex-end; background: #f0f0f0; padding: 0 0 1px 11px; gap: 3px; position: relative; }
  .dbar2 .dis { line-height: 22px; }
  .dcombo { width: 132px; height: 22px; box-sizing: border-box; border: 1px solid #888; color: #888; padding: 0 3px 0 2px; line-height: 20px; display: flex; align-items: center; justify-content: space-between; }
  .canvas { height: 442px; flex: none; margin-top: 3px; box-sizing: border-box; border: 2px solid #ff0000; background: #000; }
  .draw { width: 656px; height: 438px; display: block; }
  .gl { stroke: #444; stroke-width: 1; stroke-dasharray: 10 4 2 4; }
  .axis { fill: #444; font: 11px "Liberation Sans", sans-serif; }
  .leader { stroke: #eee; stroke-width: 1; }
  .outline { fill: none; stroke: #fff; stroke-width: 4; }
  .hoop { fill: none; stroke: #ff0000; stroke-width: 5; }
  .bar { fill: #000; stroke: #ffee00; stroke-width: 1.800; }
  .dim { fill: none; stroke: #1cf01c; stroke-width: 2; }
  .cjk { fill: #fff; font: 28px "Noto Sans CJK SC", sans-serif; letter-spacing: 2px; font-weight: 300; }
  .gtxt { fill: #0ee00e; font: 31px "Liberation Serif", serif; }
  .num2 { fill: #fff; font: 31px "Liberation Serif", serif; }
  .dstatus { height: 20px; flex: none; margin-top: 7px; display: flex; gap: 2px; font: 10px/18px "Liberation Mono", monospace; }
  .dstatus span { box-sizing: border-box; border: 1px solid #e0e0e0; display: block; background: #f6f6f6; }
  .d1 { width: 144px; padding-left: 3px; }
  .d2 { flex: 1; position: relative; }
  .rz { position: absolute; right: 1px; bottom: 1px; width: 11px; height: 11px; }

  .mark { position: absolute; left: 523px; top: 170px; width: 190px; height: 60px; }
</style>
